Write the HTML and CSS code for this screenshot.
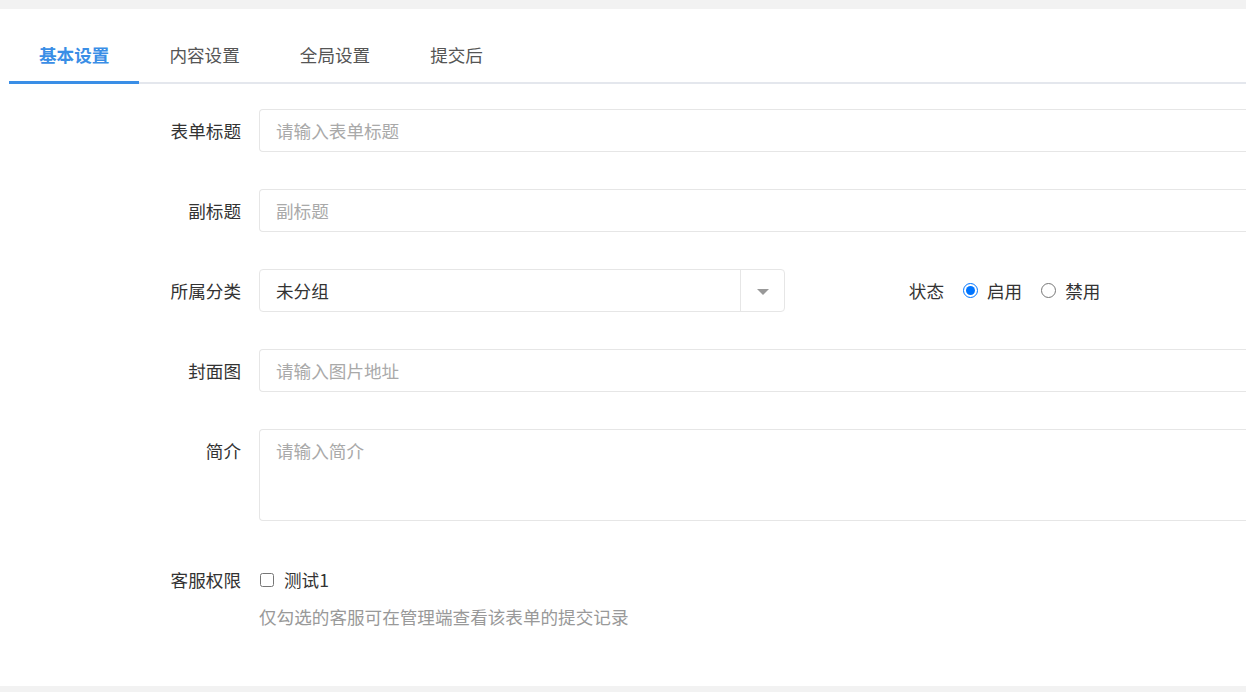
FILE: index.html
```html
<!DOCTYPE html>
<html lang="zh-CN">
<head>
  <meta charset="UTF-8" />
  <title>表单设置</title>
  <link rel="stylesheet" href="styles.css">
</head>
<body>
  <div class="panel">
    <div class="tabs">
      <a class="tab active">基本设置</a>
      <a class="tab">内容设置</a>
      <a class="tab">全局设置</a>
      <a class="tab">提交后</a>
    </div>

    <form class="form">
      <div class="form-item">
        <label class="form-label">表单标题</label>
        <div class="form-control">
          <input class="input" type="text" placeholder="请输入表单标题" />
        </div>
      </div>

      <div class="form-item">
        <label class="form-label">副标题</label>
        <div class="form-control">
          <input class="input" type="text" placeholder="副标题" />
        </div>
      </div>

      <div class="form-item">
        <label class="form-label">所属分类</label>
        <div class="select">
          <span class="select-value">未分组</span>
          <span class="select-arrow"><i class="caret"></i></span>
        </div>
        <label class="form-label status-label">状态</label>
        <div class="radios">
          <label class="radio"><input type="radio" name="status" checked /> 启用</label>
          <label class="radio"><input type="radio" name="status" /> 禁用</label>
        </div>
      </div>

      <div class="form-item">
        <label class="form-label">封面图</label>
        <div class="form-control">
          <input class="input" type="text" placeholder="请输入图片地址" />
        </div>
      </div>

      <div class="form-item">
        <label class="form-label">简介</label>
        <div class="form-control">
          <textarea class="textarea" placeholder="请输入简介"></textarea>
        </div>
      </div>

      <div class="form-item">
        <label class="form-label">客服权限</label>
        <div class="form-control">
          <label class="checkbox"><input type="checkbox" /> 测试1</label>
          <div class="hint">仅勾选的客服可在管理端查看该表单的提交记录</div>
        </div>
      </div>
    </form>
  </div>
</body>
</html>
```

FILE: styles.css
```css
* {
  margin: 0;
  padding: 0;
  box-sizing: border-box;
  font-family: "Noto Sans CJK SC", "Noto Sans", sans-serif;
}

body {
  background-color: #f2f2f2;
  padding-top: 9px;
  overflow: hidden;
}

.panel {
  background-color: #fff;
  height: 677px;
  padding-left: 9px;
  font-size: 17.6px;
  color: #333;
}

/* tabs */
.tabs {
  display: flex;
  padding-top: 19px;
  border-bottom: 2px solid #e4e7ed;
}

.tab {
  padding: 0 30px;
  line-height: 53px;
  color: #555;
  cursor: pointer;
  margin-bottom: -2px;
  border-bottom: 3px solid transparent;
}

.tab.active {
  color: #3a8ee6;
  font-weight: bold;
  border-bottom-color: #3a8ee6;
}

/* form */
.form {
  padding-top: 25px;
}

.form-item {
  display: flex;
  align-items: flex-start;
  margin-bottom: 37px;
}

.form-label {
  width: 250px;
  flex-shrink: 0;
  text-align: right;
  padding-right: 18px;
  line-height: 43px;
  color: #333;
}

.form-control {
  flex: 1;
  min-width: 0;
}

/* inputs run off the right edge, so no right border */
.input,
.textarea {
  display: block;
  width: 100%;
  height: 43px;
  border: 1px solid #e6e6e6;
  border-right: none;
  border-radius: 4px 0 0 4px;
  padding: 0 16px;
  font-size: 17.6px;
  color: #333;
  outline: none;
}

.textarea {
  height: 92px;
  padding-top: 8px;
  resize: none;
  line-height: 26px;
}

.input::placeholder,
.textarea::placeholder {
  color: #a9a9a9;
}

/* select */
.select {
  display: flex;
  width: 526px;
  height: 43px;
  border: 1px solid #e6e6e6;
  border-radius: 4px;
}

.select-value {
  flex: 1;
  padding-left: 16px;
  line-height: 41px;
}

.select-arrow {
  width: 44px;
  border-left: 1px solid #e6e6e6;
  display: flex;
  align-items: center;
  justify-content: center;
}

.caret {
  width: 0;
  height: 0;
  border-left: 6px solid transparent;
  border-right: 6px solid transparent;
  border-top: 6px solid #999;
  margin-top: 2px;
}

.status-label {
  width: 177px;
}

.radios {
  display: flex;
  height: 43px;
  align-items: center;
  gap: 18px;
}

.radio,
.checkbox {
  display: flex;
  align-items: center;
  gap: 9px;
}

.radio input {
  width: 15px;
  height: 15px;
  margin: 0 0 0 1px;
}

.checkbox {
  height: 43px;
  gap: 10px;
}

.checkbox input {
  width: 14px;
  height: 14px;
  margin: 0 0 0 1px;
}

.hint {
  color: #999;
  line-height: 32px;
}
```
